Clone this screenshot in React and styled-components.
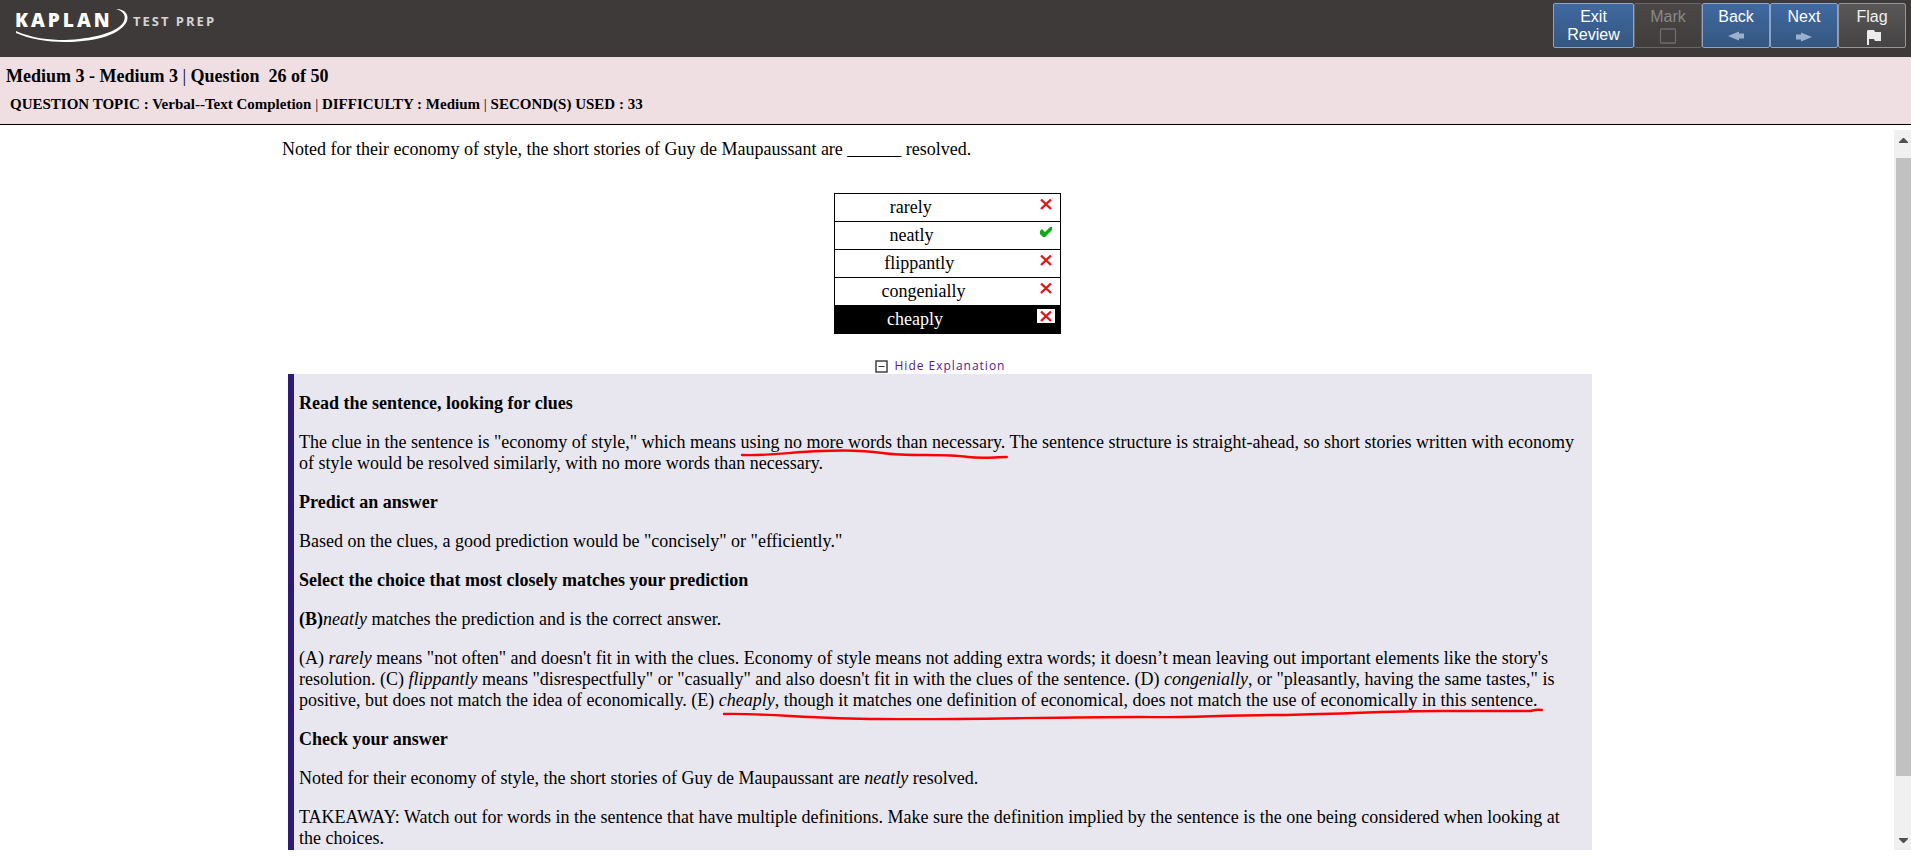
import React, { useState } from "react";
import styled, { createGlobalStyle } from "styled-components";

const GlobalStyle = createGlobalStyle`
  *, *::before, *::after { box-sizing: border-box; }
  html, body { margin: 0; background: #fff; }
  body {
    font-family: "Liberation Serif", "Times New Roman", serif;
    font-size: 18px;
    line-height: 21px;
    color: #000;
  }
`;

const Page = styled.div`
  display: flex;
  flex-direction: column;
  height: 100vh;
  padding-bottom: 8px;
`;

const TopBar = styled.header`
  display: flex;
  flex: none;
  justify-content: space-between;
  align-items: flex-start;
  min-height: 57px;
  padding: 3px 5px 9px 14px;
  background: #3e3a39;
`;

const Logo = styled.svg`
  display: block;
  width: 204px;
  height: 42px;
  fill: #fff;
  font-family: "Open Sans", "Noto Sans", sans-serif;
`;

const Wordmark = styled.text`
  font-size: 19px;
  font-weight: 800;
  letter-spacing: 3px;
`;

const WordmarkSuffix = styled.text`
  font-size: 13px;
  font-weight: 700;
  letter-spacing: 2px;
  fill: #d4d4d4;
`;

const Toolbar = styled.nav`
  display: flex;
`;

const toolTones = {
  blue: { from: "#4069a2", to: "#35577f", edge: "#89a5cb", text: "#fff" },
  grey: { from: "#595757", to: "#454343", edge: "#979797", text: "#f0f0f0" },
  off: { from: "#4a4746", to: "#403d3c", edge: "#696766", text: "#8a8888" },
};

const ToolButton = styled.button`
  display: flex;
  flex-direction: column;
  align-items: center;
  width: ${(p) => (p.$wide ? 81 : 68)}px;
  height: 45px;
  padding: 4px 0 0;
  border: 1px solid ${(p) => toolTones[p.$tone].edge};
  border-radius: 2px;
  background: linear-gradient(${(p) => toolTones[p.$tone].from}, ${(p) => toolTones[p.$tone].to});
  color: ${(p) => toolTones[p.$tone].text};
  font: 16px/18px "Liberation Sans", Arial, sans-serif;
`;

const ToolIcon = styled.svg`
  width: 18px;
  height: 18px;
  margin-top: 1px;
`;

const InfoBar = styled.section`
  flex: none;
  padding: 9px 6px 11px;
  border-bottom: 1px solid #000;
  background: #f0dfe2;
`;

const QuizTitle = styled.h1`
  margin: 0;
  font-size: 18px;
  line-height: 21px;
  white-space: pre-wrap;
`;

const QuizDetails = styled.p`
  margin: 8px 0 0;
  padding-left: 4px;
  font-size: 15px;
  font-weight: bold;
  line-height: 18px;
`;

const Divider = styled.span`
  font-weight: normal;
`;

const Body = styled.div`
  display: flex;
  flex: 1;
  min-height: 0;
  padding-top: 5px;
`;

const Content = styled.main`
  flex: 1;
  min-width: 0;
  overflow-y: auto;
  scrollbar-width: none;
  padding: 9px 282px 0;
`;

const Question = styled.p`
  margin: 0;
`;

const Choices = styled.table`
  width: 227px;
  margin: 33px auto 0;
  border-collapse: collapse;
`;

const ChoiceRow = styled.tr`
  height: 28px;
  border: 1px solid #000;
  background: ${(p) => (p.$chosen ? "#000" : "#fff")};
  color: ${(p) => (p.$chosen ? "#fff" : "#000")};
`;

const ChoiceCell = styled.td`
  padding: 3px 0 3px 29px;
`;

const ChoiceText = styled.div`
  display: flex;
  &::before { content: ""; flex: 1; }
  &::after { content: ""; flex: 4; }
`;

const MarkCell = styled.td`
  width: 23px;
  padding: 3px 0 0;
  vertical-align: top;
`;

const Mark = styled.svg`
  display: block;
  width: 18px;
  height: 14px;
  background: #fff;
`;

const Explanation = styled.section`
  margin: 24px 20px 0 6px;
`;

const ToggleRow = styled.div`
  display: flex;
  justify-content: center;
  height: 16px;
`;

const Toggle = styled.a`
  display: flex;
  align-items: center;
  gap: 7px;
  color: #551a8b;
  font: 12px/16px "Open Sans", Verdana, sans-serif;
  letter-spacing: 1px;
  text-decoration: none;
`;

const ToggleIcon = styled.svg`
  width: 13px;
  height: 13px;
`;

const Panel = styled.article`
  padding: 19px 14px 0 5px;
  border-left: 6px solid #2e1a70;
  background: #e8e7f0;
`;

const PanelHeading = styled.h2`
  margin: 0 0 18px;
  font-size: 18px;
  line-height: 21px;
`;

const Paragraph = styled.p`
  margin: 0;
  padding-bottom: 18px;
`;

const Marked = styled.span`
  position: relative;
`;

const PenStroke = styled.svg`
  position: absolute;
  left: 0;
  top: 16px;
  width: 100%;
  height: 14px;
  overflow: visible;
  fill: none;
  stroke: #f00;
  stroke-width: 2.4;
  stroke-linecap: round;
  pointer-events: none;
`;

const ScrollRail = styled.div`
  display: flex;
  flex: none;
  flex-direction: column;
  width: 17px;
  background: #f0f0f0;
`;

const ScrollArrow = styled.button`
  flex: none;
  height: 20px;
  padding: 0 0 0 2px;
  border: 0;
  background: transparent;
`;

const ArrowShape = styled.svg`
  display: block;
  width: 9px;
  height: 5px;
  margin: 0 auto;
  fill: #505050;
`;

const ScrollTrack = styled.div`
  flex: 1;
  padding: 8px 0 0 2px;
`;

const ScrollThumb = styled.div`
  height: 92%;
  min-height: 20px;
  background: #c1c1c1;
`;

const choices = [
  { word: "rarely" },
  { word: "neatly", correct: true },
  { word: "flippantly" },
  { word: "congenially" },
  { word: "cheaply", chosen: true },
];

function KaplanLogo() {
  return (
    <Logo viewBox="14 3 204 42" role="img" aria-label="Kaplan Test Prep">
      <Wordmark x="15" y="27">KAPLAN</Wordmark>
      <WordmarkSuffix x="133" y="26">TEST PREP</WordmarkSuffix>
      <path d="M16 31 C31 38 49 40 65 40 C91 39 116 33 123 23 C127 17 124 11 116 9 C126 9 130 16 126 23 C118 36 92 42 65 42 C48 42 29 39 16 33 Z" />
    </Logo>
  );
}

function ResultMark({ correct }) {
  return (
    <Mark viewBox="0 0 18 14" role="img" aria-label={correct ? "Correct" : "Incorrect"}>
      {correct ? (
        <path d="M3 6 L5 4 L8 7 L13 2 H15 V5 L8 12 H6 L3 9 Z" fill="#0cab12" />
      ) : (
        <path d="M4 2.5 L14 12 M14 2.5 L4 12" fill="none" stroke="#e01616" strokeWidth="2.4" />
      )}
    </Mark>
  );
}

export default function App() {
  const [open, setOpen] = useState(true);

  return (
    <>
      <GlobalStyle />
      <Page>
        <TopBar>
          <KaplanLogo />
          <Toolbar aria-label="Question navigation">
            <ToolButton $tone="blue" $wide>
              <span>Exit</span>
              <span>Review</span>
            </ToolButton>
            <ToolButton $tone="off" disabled>
              Mark
              <ToolIcon viewBox="0 0 18 18" aria-hidden="true">
                <rect x="1.5" y="2" width="15" height="14" rx="1" fill="none" stroke="#6f6d6c" strokeWidth="1.3" />
              </ToolIcon>
            </ToolButton>
            <ToolButton $tone="blue">
              Back
              <ToolIcon viewBox="0 0 18 18" aria-hidden="true">
                <path d="M1 9 L12 4.5 V6.5 H17 V11.5 H12 V13.5 Z" fill="#9bb0cf" />
              </ToolIcon>
            </ToolButton>
            <ToolButton $tone="blue">
              Next
              <ToolIcon viewBox="0 0 18 18" aria-hidden="true">
                <path d="M17 10 L6 5.5 V7.5 H1 V12.5 H6 V14.5 Z" fill="#9bb0cf" />
              </ToolIcon>
            </ToolButton>
            <ToolButton $tone="grey">
              Flag
              <ToolIcon viewBox="0 0 18 18" aria-hidden="true">
                <path d="M5 3 H11 L12 5 H18 V14 H12 L11 12 H6 V18 H4 V4 Z" fill="#ececec" />
              </ToolIcon>
            </ToolButton>
          </Toolbar>
        </TopBar>

        <InfoBar>
          <QuizTitle>
            Medium 3 - Medium 3 <Divider>|</Divider>{" Question  26 of 50"}
          </QuizTitle>
          <QuizDetails>
            QUESTION TOPIC : Verbal--Text Completion <Divider>|</Divider> DIFFICULTY : Medium{" "}
            <Divider>|</Divider> SECOND(S) USED : 33
          </QuizDetails>
        </InfoBar>

        <Body>
          <Content>
            <Question>
              Noted for their economy of style, the short stories of Guy de Maupaussant are ______ resolved.
            </Question>

            <Choices>
              <tbody>
                {choices.map((c) => (
                  <ChoiceRow key={c.word} $chosen={c.chosen}>
                    <ChoiceCell>
                      <ChoiceText>{c.word}</ChoiceText>
                    </ChoiceCell>
                    <MarkCell>
                      <ResultMark correct={c.correct} />
                    </MarkCell>
                  </ChoiceRow>
                ))}
              </tbody>
            </Choices>

            <Explanation>
              <ToggleRow>
                <Toggle
                  href="#explanation"
                  onClick={(e) => {
                    e.preventDefault();
                    setOpen(!open);
                  }}
                >
                  <ToggleIcon viewBox="0 0 13 13" aria-hidden="true">
                    <rect x="1" y="1" width="11" height="11" fill="#fff" stroke="#333" strokeWidth="1.4" />
                    <path d={open ? "M3.5 6.5 H9.5" : "M3.5 6.5 H9.5 M6.5 3.5 V9.5"} stroke="#333" />
                  </ToggleIcon>
                  {open ? "Hide Explanation" : "Show Explanation"}
                </Toggle>
              </ToggleRow>

              {open && (
                <Panel id="explanation">
                  <PanelHeading>Read the sentence, looking for clues</PanelHeading>
                  <Paragraph>
                    The clue in the sentence is "economy of style," which means{" "}
                    <Marked>
                      using no more words than necessary.
                      <PenStroke viewBox="0 0 266 14" preserveAspectRatio="none" aria-hidden="true">
                        <path d="M1 7 C30 8 50 4 80 3 C102 2 122 2 142 5 C170 9 200 5 228 9 C244 11 254 9 267 9" />
                      </PenStroke>
                    </Marked>{" "}
                    The sentence structure is straight-ahead, so short stories written with economy of style would be
                    resolved similarly, with no more words than necessary.
                  </Paragraph>
                  <PanelHeading>Predict an answer</PanelHeading>
                  <Paragraph>
                    Based on the clues, a good prediction would be "concisely" or "efficiently."
                  </Paragraph>
                  <PanelHeading>Select the choice that most closely matches your prediction</PanelHeading>
                  <Paragraph>
                    <b>(B)</b>
                    <i>neatly</i> matches the prediction and is the correct answer.
                  </Paragraph>
                  <Paragraph>
                    (A) <i>rarely</i> means "not often" and doesn't fit in with the clues. Economy of style means not
                    adding extra words; it doesn’t mean leaving out important elements like the story's resolution. (C){" "}
                    <i>flippantly</i> means "disrespectfully" or "casually" and also doesn't fit in with the clues of
                    the sentence. (D) <i>congenially</i>, or "pleasantly, having the same tastes," is positive, but does
                    not match the idea of economically. (E){" "}
                    <Marked>
                      <i>cheaply</i>, though it matches one definition of economical, does not match the use of
                      economically in this sentence.
                      <PenStroke viewBox="0 0 818 14" preserveAspectRatio="none" aria-hidden="true">
                        <path d="M5 8 C50 7 90 13 160 13 C240 14 330 11 420 11 C470 12 500 9 560 9 C620 8 670 5 720 5 H811 C815 4 817 3 822 4" />
                      </PenStroke>
                    </Marked>
                  </Paragraph>
                  <PanelHeading>Check your answer</PanelHeading>
                  <Paragraph>
                    Noted for their economy of style, the short stories of Guy de Maupaussant are <i>neatly</i>{" "}
                    resolved.
                  </Paragraph>
                  <Paragraph>
                    TAKEAWAY: Watch out for words in the sentence that have multiple definitions. Make sure the
                    definition implied by the sentence is the one being considered when looking at the choices.
                  </Paragraph>
                </Panel>
              )}
            </Explanation>
          </Content>

          <ScrollRail>
            <ScrollArrow aria-label="Scroll up">
              <ArrowShape viewBox="0 0 9 5">
                <path d="M4 0 H5 L9 4 V5 H0 V4 Z" />
              </ArrowShape>
            </ScrollArrow>
            <ScrollTrack>
              <ScrollThumb />
            </ScrollTrack>
            <ScrollArrow aria-label="Scroll down">
              <ArrowShape viewBox="0 0 9 5">
                <path d="M4 5 H5 L9 1 V0 H0 V1 Z" />
              </ArrowShape>
            </ScrollArrow>
          </ScrollRail>
        </Body>
      </Page>
    </>
  );
}
